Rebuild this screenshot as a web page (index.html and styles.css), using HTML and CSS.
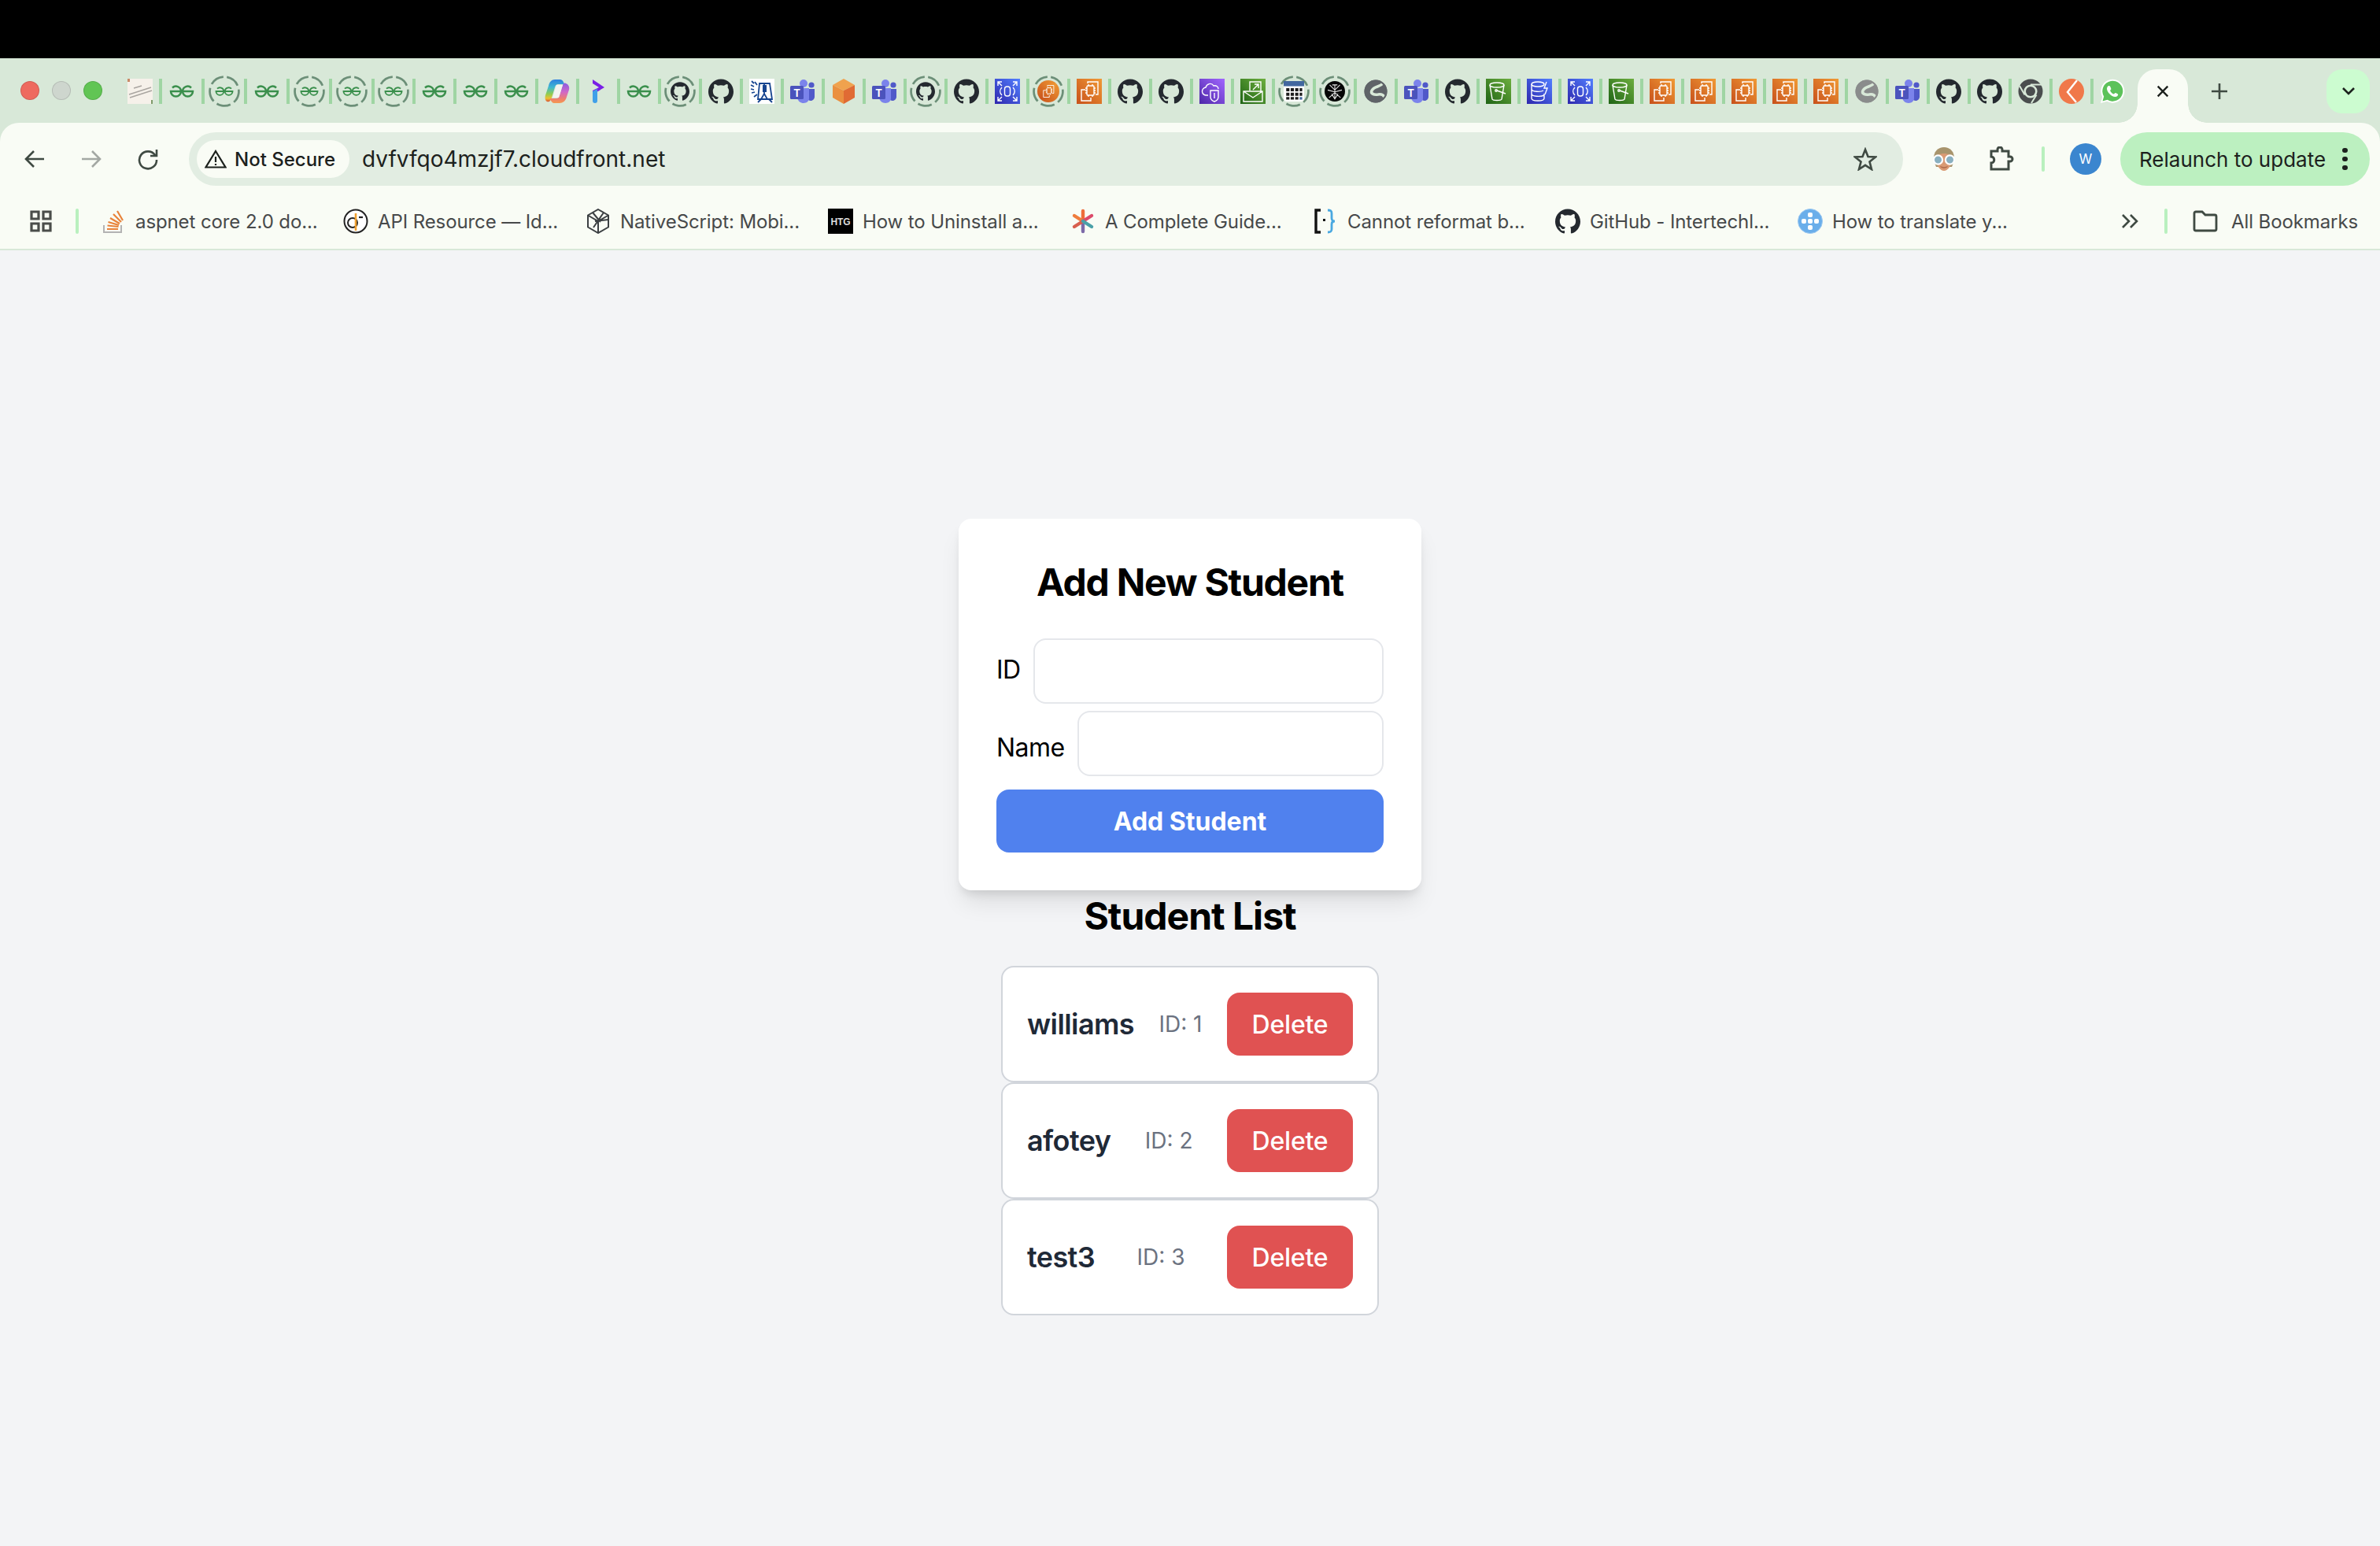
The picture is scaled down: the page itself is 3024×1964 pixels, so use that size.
FILE: index.html
```html
<!DOCTYPE html>
<html lang="en">
<head>
<meta charset="utf-8">
<title>Student Manager</title>
<link rel="stylesheet" href="styles.css">
</head>
<body>
<svg class="defs" aria-hidden="true">
  <defs>
    <linearGradient id="gOrange" x1="0" y1="1" x2="1" y2="0"><stop offset="0" stop-color="#c8511b"/><stop offset="1" stop-color="#f09a35"/></linearGradient>
    <linearGradient id="gBlue" x1="0" y1="1" x2="1" y2="0"><stop offset="0" stop-color="#2e27ad"/><stop offset="1" stop-color="#527fff"/></linearGradient>
    <linearGradient id="gGreen" x1="0" y1="1" x2="1" y2="0"><stop offset="0" stop-color="#1f6415"/><stop offset="1" stop-color="#6cae3e"/></linearGradient>
    <linearGradient id="gPurple" x1="0" y1="1" x2="1" y2="0"><stop offset="0" stop-color="#4d27a8"/><stop offset="1" stop-color="#a166ff"/></linearGradient>
    <linearGradient id="gCopA" x1="0" y1="0" x2="0" y2="1"><stop offset="0" stop-color="#2f7fe0"/><stop offset=".35" stop-color="#3fb8d0"/><stop offset=".65" stop-color="#8fcc50"/><stop offset=".85" stop-color="#eec030"/><stop offset="1" stop-color="#d85038"/></linearGradient>
    <linearGradient id="gCopB" x1="0" y1="0" x2="0" y2="1"><stop offset="0" stop-color="#8a5ee0"/><stop offset=".45" stop-color="#d068c8"/><stop offset=".8" stop-color="#f0806a"/><stop offset="1" stop-color="#f49a50"/></linearGradient>
  </defs>
  <symbol id="thumb" viewBox="0 0 32 32"><rect width="32" height="32" fill="#f6f1ea"/><path d="M2 20 30 11M3 24 31 15M8 12l10-3" stroke="#a9a5a0" stroke-width="1.4" fill="none"/><rect width="3" height="4" fill="#c98a68"/><rect x="30" y="27" width="2" height="5" fill="#7f9a6a"/></symbol>
  <symbol id="gfg" viewBox="0 0 32 32"><path d="M4 11.500A6.500 6.500 0 0 1 15 16 6.500 6.500 0 0 1 2 16H15M28 11.500A6.500 6.500 0 0 0 17 16 6.500 6.500 0 0 0 30 16H17" fill="none" stroke="#3a8f4c" stroke-width="2.500"/></symbol>
  <symbol id="ring" viewBox="-4 -4 40 40"><circle cx="16" cy="16" r="18.400" fill="none" stroke="#6c8f78" stroke-width="2.700" stroke-dasharray="18 5.100" transform="rotate(-80 16 16)"/></symbol>
  <symbol id="gh" viewBox="0 0 24 24"><path fill="#24292f" d="M12 .297c-6.630 0-12 5.373-12 12 0 5.303 3.438 9.800 8.205 11.385.6.113.82-.258.82-.577 0-.285-.01-1.040-.015-2.040-3.338.724-4.042-1.610-4.042-1.610C4.422 18.070 3.633 17.700 3.633 17.700c-1.087-.744.084-.729.084-.729 1.205.084 1.838 1.236 1.838 1.236 1.070 1.835 2.809 1.305 3.495.998.108-.776.417-1.305.76-1.605-2.665-.3-5.466-1.332-5.466-5.930 0-1.310.465-2.380 1.235-3.220-.135-.303-.54-1.523.105-3.176 0 0 1.005-.322 3.300 1.230.96-.267 1.980-.399 3-.405 1.020.006 2.040.138 3 .405 2.280-1.552 3.285-1.230 3.285-1.230.645 1.653.24 2.873.12 3.176.765.84 1.230 1.910 1.230 3.220 0 4.610-2.805 5.625-5.475 5.920.42.36.81 1.096.81 2.220 0 1.606-.015 2.896-.03 3.286 0 .315.21.69.825.57C20.565 22.092 24 17.592 24 12.297c0-6.627-5.373-12-12-12"/></symbol>
  <symbol id="copilot" viewBox="0 0 32 32"><path d="M13 1h7c2 0 4 2 5 6H17c-2 0-3 1-4 4l-4 13c-1 4-3 6-6 5-2-1-3-4-2-8L5 9c1-5 4-8 8-8Z" fill="url(#gCopA)"/><path d="M19 31h-7c-2 0-4-2-5-6h8c2 0 3-1 4-4l4-13c1-2 2-3 4-2 3 1 5 4 4 8l-3 9c-1 5-5 8-9 8Z" fill="url(#gCopB)"/><path d="M15 8h8l-5 16h-8Z" fill="#f4f4f0"/></symbol>
  <symbol id="prompt" viewBox="0 0 32 32"><path d="M9 1 24 11 9 20v-5l8-4-8-5Z" fill="#7a1fe6"/><path d="M9 16l6-3v15a3 3 0 0 1-6 0Z" fill="#3f9fe8"/></symbol>
  <symbol id="irs" viewBox="0 0 32 32"><rect width="32" height="32" fill="#fff"/><g fill="none" stroke="#16448f" stroke-width="1.800"><path d="M3 3l3 3M2 8l4 2M2 13l4 1M3 18l4-1M6 23l4-3M7 4l3 4"/><path d="M13 6h13l3 20H11Z"/><path d="M19 6v14M15 26l4-7 4 7M11 30l4-4M29 30l-4-4"/></g><path d="M17 8h5v9h-5Z" fill="#16448f"/></symbol>
  <symbol id="teams" viewBox="0 0 32 32"><circle cx="17" cy="6" r="5" fill="#7b83eb"/><circle cx="27" cy="8" r="3.600" fill="#5059c9"/><path d="M23 13h8v10c0 3-3 5-5 5-2 0-3-1-3-2Z" fill="#5059c9"/><path d="M9 12h15v13c0 3-3 6-7 6s-7-3-8-6Z" fill="#7b83eb"/><rect y="9" width="17" height="17" rx="1.500" fill="#4b53bc"/></symbol>
  <symbol id="cube" viewBox="0 0 32 32"><path d="M16 0 30 8 16 15 2 8Z" fill="#f0a24e"/><path d="M2 8 16 15V32L2 24Z" fill="#ea9040"/><path d="M30 8 16 15V32L30 24Z" fill="#e06b34"/></symbol>
  <symbol id="ec2" viewBox="0 0 32 32"><rect width="32" height="32" fill="url(#gOrange)"/><g fill="none" stroke="#fff" stroke-width="1.400"><path d="M14 6V4h13v16h-3"/><path d="M11 14H6v14h12v-4"/><rect x="13" y="9" width="9" height="12" rx="1"/><path d="M11 12h2M11 15h2M11 18h2M22 12h2M22 15h2M22 18h2M15 7v2M20 7v2M15 21v2M20 21v2"/></g></symbol>
  <symbol id="awsblue" viewBox="0 0 32 32"><rect width="32" height="32" fill="url(#gBlue)"/><g fill="none" stroke="#fff" stroke-width="1.400"><path d="M4 9V4h5M4 4l5 5M28 9V4h-5M28 4l-5 5M4 23v5h5M4 28l5-5M28 23v5h-5M28 28l-5-5"/><rect x="12.500" y="10" width="7" height="12" rx="3"/><path d="M9 11c-3 3-3 7 0 10M23 11c3 3 3 7 0 10"/></g></symbol>
  <symbol id="awspurple" viewBox="0 0 32 32"><rect width="32" height="32" fill="url(#gPurple)"/><g fill="none" stroke="#fff" stroke-width="1.400"><path d="M11 21H9a5 5 0 0 1-1-10c1-4 7-7 10-2 3-1 6 1 6 4"/><path d="M14 15h10v8c0 3-2 5-5 6-3-1-5-3-5-6Z"/><path d="M19 18v7"/></g></symbol>
  <symbol id="awsmail" viewBox="0 0 32 32"><rect width="32" height="32" fill="url(#gGreen)"/><g fill="none" stroke="#fff" stroke-width="1.400"><path d="M12 15V4h14v14"/><path d="M16 14l7-7M18 7h5v5"/><path d="M4 16h24v13H4ZM4 16l12 8 12-8"/></g></symbol>
  <symbol id="s3" viewBox="0 0 32 32"><rect width="32" height="32" fill="url(#gGreen)"/><g fill="none" stroke="#fff" stroke-width="1.400"><ellipse cx="14" cy="8" rx="9" ry="3"/><path d="M5 8l3 18c1 2 11 2 12 0l3-18"/><circle cx="13" cy="15" r="1.200"/><path d="M14 15l11 4"/></g></symbol>
  <symbol id="dynamo" viewBox="0 0 32 32"><rect width="32" height="32" fill="url(#gBlue)"/><g fill="none" stroke="#fff" stroke-width="1.400"><ellipse cx="14" cy="7" rx="8" ry="3"/><path d="M6 7v18c0 4 16 4 16 0v-6M6 13c0 4 12 4 15 2M6 19c0 4 12 4 16 2"/><path d="M25 4l-3 8h4l-3 8"/></g></symbol>
  <symbol id="cal" viewBox="0 0 32 32"><rect width="32" height="32" rx="5" fill="#fff"/><rect width="32" height="8" fill="#42679f"/><g fill="#1c1c1c"><path d="M4 11h5v5H4ZM11 11h5v5h-5ZM18 11h5v5h-5ZM25 11h4v5h-4ZM4 18h5v5H4ZM11 18h5v5h-5ZM18 18h5v5h-5ZM25 18h4v5h-4ZM4 25h5v4H4ZM11 25h5v4h-5ZM18 25h5v4h-5Z"/></g><rect x="25" y="25" width="4" height="4" fill="#42679f"/></symbol>
  <symbol id="spider" viewBox="0 0 32 32"><circle cx="16" cy="16" r="16" fill="#050505"/><g fill="none" stroke="#e8e8e8" stroke-width="1.300"><path d="M16 6v22M8 6l8 8 8-8M5 14l11 3 11-3M7 26l9-8 9 8M12 6h8M11 20l5 8 5-8"/></g></symbol>
  <symbol id="globe" viewBox="0 0 32 32"><circle cx="16" cy="16" r="14.500" fill="currentColor"/><path d="M25 6C21 11 14 9 11 15 9 19 14 21 19 20 23 19 25 20 27 23" fill="none" stroke="#d8e8d8" stroke-width="3.600"/><circle cx="16" cy="16" r="13.500" fill="none" stroke="currentColor" stroke-width="2"/></symbol>
  <symbol id="chrome" viewBox="0 0 32 32"><circle cx="16" cy="16" r="15.500" fill="#4a4d4e"/><circle cx="16" cy="16" r="8.600" fill="#d8e8d8"/><circle cx="16" cy="16" r="6" fill="#4a4d4e"/><path d="M16 7.400h14M8.600 20.500 2 9M23.500 20.500 17 31" stroke="#d8e8d8" stroke-width="2" fill="none"/></symbol>
  <symbol id="kcircle" viewBox="0 0 32 32"><circle cx="16" cy="16" r="16" fill="#f0784a"/><path d="M23 2 11 17l11 13" fill="none" stroke="#fff" stroke-width="2.400"/></symbol>
  <symbol id="wa" viewBox="0 0 32 32"><path d="M1 31l2.200-8A15 15 0 1 1 9 28.800Z" fill="#fff"/><path d="M3.500 28.500l1.700-6A13 13 0 1 1 9.500 26.800Z" fill="#5cc25a"/><path d="M11.500 9c-1 0-2.500 1.500-2.500 3.800 0 4 5.500 10.200 10.500 10.200 2.500 0 3.700-1.600 3.700-3 0-.6-2.900-2-3.500-2-.5 0-1.300 1.500-1.900 1.500-1.500 0-4.600-3-4.600-4.500 0-.6 1.200-1.300 1.200-1.900 0-.7-1.300-4.100-2.400-4.100Z" fill="#fff"/></symbol>
  <symbol id="so" viewBox="0 0 32 32"><path d="M4 21v9h22v-9" fill="none" stroke="#b3b3b3" stroke-width="2"/><path d="M8 26h14M8.500 21.500l14 1.500M9.500 17l13.500 4M12 12l12 7M16 7l10 10M21 3l7 12" fill="none" stroke="#e8833a" stroke-width="2.200"/></symbol>
  <symbol id="api" viewBox="0 0 32 32"><circle cx="16" cy="16" r="14.500" fill="#fff" stroke="#222" stroke-width="2"/><circle cx="12" cy="18" r="6" fill="none" stroke="#222" stroke-width="2"/><path d="M16 6v22" stroke="#f0a030" stroke-width="2.600"/><path d="M20 11h5" stroke="#222" stroke-width="2.200"/></symbol>
  <symbol id="ns" viewBox="0 0 32 32"><g fill="none" stroke="#3c4043" stroke-width="2"><path d="M16 1 29 8.500v15L16 31 3 23.500v-15Z"/><path d="M3 8.500 16 16l13-7.500M16 16v15M9 5l10 12M23 5 10 24M29 14l-17 2"/></g></symbol>
  <symbol id="star8" viewBox="0 0 32 32"><g stroke-width="4.400" stroke-linecap="round"><path d="M16 16V3" stroke="#ee6d3b"/><path d="M16 16V29" stroke="#7c6aa8"/><path d="M16 16 5 9" stroke="#ef7d3d"/><path d="M16 16 27 9" stroke="#dc4a6a"/><path d="M16 16 5 23" stroke="#d8604e"/><path d="M16 16 27 23" stroke="#4aa0a8"/></g></symbol>
  <symbol id="bracket" viewBox="0 0 32 32"><path d="M10 2H4v28h6" fill="none" stroke="#111" stroke-width="3.400"/><path d="M19 2c4 0 5 1 5 4v6c0 2 1 4 4 4-3 0-4 2-4 4v6c0 3-1 4-5 4" fill="none" stroke="#4aa8e0" stroke-width="2.800"/><rect x="13" y="13" width="3" height="3" fill="#111"/></symbol>
  <symbol id="dots" viewBox="0 0 32 32"><circle cx="16" cy="16" r="15.500" fill="#6aaeea" stroke="#9cc8f0"/><g fill="#fff"><rect x="13" y="5" width="6" height="6" rx="2"/><rect x="13" y="21" width="6" height="6" rx="2"/><rect x="5" y="13" width="6" height="6" rx="2"/><rect x="13" y="13" width="6" height="6" rx="2"/><rect x="21" y="13" width="6" height="6" rx="2"/></g></symbol>
</svg>

<header class="chrome">
  <div class="topbar"></div>
  <div class="tabstrip">
    <div class="lights"><span class="light light-red"></span><span class="light light-grey"></span><span class="light light-green"></span></div>
    <div class="tab tab-first"><svg class="ic" viewBox="0 0 32 32"><use href="#thumb"/></svg></div>
    <div class="tab tab-wide"><svg class="ic" viewBox="0 0 32 32"><use href="#gfg"/></svg></div>
    <div class="tab tab-wide"><svg class="ic" viewBox="0 0 32 32"><use href="#ring" x="-4" y="-4" width="40" height="40"/><use href="#gfg" x="4" y="4" width="24" height="24"/></svg></div>
    <div class="tab tab-wide"><svg class="ic" viewBox="0 0 32 32"><use href="#gfg"/></svg></div>
    <div class="tab tab-wide"><svg class="ic" viewBox="0 0 32 32"><use href="#ring" x="-4" y="-4" width="40" height="40"/><use href="#gfg" x="4" y="4" width="24" height="24"/></svg></div>
    <div class="tab tab-wide"><svg class="ic" viewBox="0 0 32 32"><use href="#ring" x="-4" y="-4" width="40" height="40"/><use href="#gfg" x="4" y="4" width="24" height="24"/></svg></div>
    <div class="tab"><svg class="ic" viewBox="0 0 32 32"><use href="#ring" x="-4" y="-4" width="40" height="40"/><use href="#gfg" x="4" y="4" width="24" height="24"/></svg></div>
    <div class="tab"><svg class="ic" viewBox="0 0 32 32"><use href="#gfg"/></svg></div>
    <div class="tab"><svg class="ic" viewBox="0 0 32 32"><use href="#gfg"/></svg></div>
    <div class="tab"><svg class="ic" viewBox="0 0 32 32"><use href="#gfg"/></svg></div>
    <div class="tab"><svg class="ic" viewBox="0 0 32 32"><use href="#copilot"/></svg></div>
    <div class="tab"><svg class="ic" viewBox="0 0 32 32"><use href="#prompt"/></svg></div>
    <div class="tab"><svg class="ic" viewBox="0 0 32 32"><use href="#gfg"/></svg></div>
    <div class="tab"><svg class="ic" viewBox="0 0 32 32"><use href="#ring" x="-4" y="-4" width="40" height="40"/><use href="#gh" x="4" y="4" width="24" height="24"/></svg></div>
    <div class="tab"><svg class="ic" viewBox="0 0 32 32"><use href="#gh"/></svg></div>
    <div class="tab"><svg class="ic" viewBox="0 0 32 32"><use href="#irs"/></svg></div>
    <div class="tab"><svg class="ic" viewBox="0 0 32 32"><use href="#teams"/><text x="8.500" y="22.500" class="svg-t">T</text></svg></div>
    <div class="tab"><svg class="ic" viewBox="0 0 32 32"><use href="#cube"/></svg></div>
    <div class="tab"><svg class="ic" viewBox="0 0 32 32"><use href="#teams"/><text x="8.500" y="22.500" class="svg-t">T</text></svg></div>
    <div class="tab"><svg class="ic" viewBox="0 0 32 32"><use href="#ring" x="-4" y="-4" width="40" height="40"/><use href="#gh" x="4" y="4" width="24" height="24"/></svg></div>
    <div class="tab"><svg class="ic" viewBox="0 0 32 32"><use href="#gh"/></svg></div>
    <div class="tab"><svg class="ic" viewBox="0 0 32 32"><use href="#awsblue"/></svg></div>
    <div class="tab"><svg class="ic" viewBox="0 0 32 32"><use href="#ring" x="-4" y="-4" width="40" height="40"/><circle cx="16" cy="16" r="14" fill="url(#gOrange)"/><use href="#ec2" x="6" y="6" width="20" height="20"/></svg></div>
    <div class="tab"><svg class="ic" viewBox="0 0 32 32"><use href="#ec2"/></svg></div>
    <div class="tab"><svg class="ic" viewBox="0 0 32 32"><use href="#gh"/></svg></div>
    <div class="tab"><svg class="ic" viewBox="0 0 32 32"><use href="#gh"/></svg></div>
    <div class="tab"><svg class="ic" viewBox="0 0 32 32"><use href="#awspurple"/></svg></div>
    <div class="tab"><svg class="ic" viewBox="0 0 32 32"><use href="#awsmail"/></svg></div>
    <div class="tab"><svg class="ic" viewBox="0 0 32 32"><use href="#ring" x="-4" y="-4" width="40" height="40"/><use href="#cal" x="3" y="3" width="26" height="26"/></svg></div>
    <div class="tab"><svg class="ic" viewBox="0 0 32 32"><use href="#ring" x="-4" y="-4" width="40" height="40"/><use href="#spider" x="3" y="3" width="26" height="26"/></svg></div>
    <div class="tab"><svg class="ic globe-dark" viewBox="0 0 32 32"><use href="#globe"/></svg></div>
    <div class="tab"><svg class="ic" viewBox="0 0 32 32"><use href="#teams"/><text x="8.500" y="22.500" class="svg-t">T</text></svg></div>
    <div class="tab"><svg class="ic" viewBox="0 0 32 32"><use href="#gh"/></svg></div>
    <div class="tab"><svg class="ic" viewBox="0 0 32 32"><use href="#s3"/></svg></div>
    <div class="tab"><svg class="ic" viewBox="0 0 32 32"><use href="#dynamo"/></svg></div>
    <div class="tab"><svg class="ic" viewBox="0 0 32 32"><use href="#awsblue"/></svg></div>
    <div class="tab"><svg class="ic" viewBox="0 0 32 32"><use href="#s3"/></svg></div>
    <div class="tab"><svg class="ic" viewBox="0 0 32 32"><use href="#ec2"/></svg></div>
    <div class="tab"><svg class="ic" viewBox="0 0 32 32"><use href="#ec2"/></svg></div>
    <div class="tab"><svg class="ic" viewBox="0 0 32 32"><use href="#ec2"/></svg></div>
    <div class="tab"><svg class="ic" viewBox="0 0 32 32"><use href="#ec2"/></svg></div>
    <div class="tab"><svg class="ic" viewBox="0 0 32 32"><use href="#ec2"/></svg></div>
    <div class="tab"><svg class="ic globe-light" viewBox="0 0 32 32"><use href="#globe"/></svg></div>
    <div class="tab"><svg class="ic" viewBox="0 0 32 32"><use href="#teams"/><text x="8.500" y="22.500" class="svg-t">T</text></svg></div>
    <div class="tab"><svg class="ic" viewBox="0 0 32 32"><use href="#gh"/></svg></div>
    <div class="tab"><svg class="ic" viewBox="0 0 32 32"><use href="#gh"/></svg></div>
    <div class="tab"><svg class="ic" viewBox="0 0 32 32"><use href="#chrome"/></svg></div>
    <div class="tab"><svg class="ic" viewBox="0 0 32 32"><use href="#kcircle"/></svg></div>
    <div class="tab tab-last"><svg class="ic" viewBox="0 0 32 32"><use href="#wa"/></svg></div>
    <div class="tab-active"><svg class="close" viewBox="0 0 20 20"><path d="M3 3 17 17M17 3 3 17"/></svg></div>
    <svg class="plus" viewBox="0 0 22 22"><path d="M11 1V21M1 11H21"/></svg>
    <div class="tabs-menu"><svg class="chev" viewBox="0 0 18 12"><path d="M2 2 9 9 16 2"/></svg></div>
  </div>

  <div class="toolbar">
    <div class="navrow">
      <div class="nav-icons">
        <svg class="nav-ic" viewBox="0 0 28 28"><path d="M26 14H4M13 4 3 14 13 24"/></svg>
        <svg class="nav-ic nav-off" viewBox="0 0 28 28"><path d="M2 14H24M15 4 25 14 15 24"/></svg>
        <svg class="nav-ic" viewBox="0 0 28 28"><path d="M23 9A11 11 0 1 0 25 15M25 2V10H17"/></svg>
      </div>
      <div class="address">
        <div class="secure">
          <svg class="warn" viewBox="0 0 28 24"><path d="M14 2 26.500 22.500H1.500Z"/><path d="M14 9V16M14 18V20"/></svg>
          <span class="secure-text">Not Secure</span>
        </div>
        <span class="url">dvfvfqo4mzjf7.cloudfront.net</span>
        <svg class="star" viewBox="0 0 30 30"><path d="M15 3 18.500 12 28 12.500 20.500 18.500 23 28 15 22.800 7 28 9.500 18.500 2 12.500 11.500 12Z"/></svg>
      </div>
      <svg class="emoji" viewBox="0 0 32 32">
        <path d="M3 18C2 6 9 1 16 1s14 5 13 17l-3 8H6Z" fill="#a8946c"/>
        <path d="M6 15c0-4 5-6 10-6s10 2 10 6c0 9-5 16-10 16S6 24 6 15Z" fill="#d99a74"/>
        <path d="M11 25c3 1.500 7 1.500 10 0-1 3.500-9 3.500-10 0Z" fill="#b06a4a"/>
        <circle cx="8.500" cy="17" r="5.600" fill="#8ab0c0" stroke="#fff" stroke-width="2.200"/>
        <circle cx="23.500" cy="17" r="5.600" fill="#8ab0c0" stroke="#fff" stroke-width="2.200"/>
      </svg>
      <svg class="puzzle" viewBox="0 0 32 32"><path d="M3 6H11V4a3 3 0 0 1 6 0V6H25V13H27a3 3 0 0 1 0 6H25V29H3V21C8 21 8 13 3 13Z"/></svg>
      <span class="vsep"></span>
      <span class="profile">W</span>
      <div class="relaunch">
        <span class="relaunch-text">Relaunch to update</span>
        <span class="kebab"><i></i><i></i><i></i></span>
      </div>
    </div>

    <div class="bookmarks">
      <svg class="apps" viewBox="0 0 28 28"><path d="M2 2H11V11H2ZM17 2H26V11H17ZM2 17H11V26H2ZM17 17H26V26H17Z"/></svg>
      <span class="vsep vsep-apps"></span>
      <div class="bm-list">
        <div class="bm"><svg class="ic" viewBox="0 0 32 32"><use href="#so"/></svg><span>aspnet core 2.0 do...</span></div>
        <div class="bm"><svg class="ic" viewBox="0 0 32 32"><use href="#api"/></svg><span>API Resource — Id...</span></div>
        <div class="bm"><svg class="ic" viewBox="0 0 32 32"><use href="#ns"/></svg><span>NativeScript: Mobi...</span></div>
        <div class="bm"><svg class="ic" viewBox="0 0 32 32"><rect class="htg-bg" width="32" height="32"/><text x="16" y="21" class="svg-h">HTG</text></svg><span>How to Uninstall a...</span></div>
        <div class="bm"><svg class="ic" viewBox="0 0 32 32"><use href="#star8"/></svg><span>A Complete Guide...</span></div>
        <div class="bm"><svg class="ic" viewBox="0 0 32 32"><use href="#bracket"/></svg><span>Cannot reformat b...</span></div>
        <div class="bm"><svg class="ic" viewBox="0 0 32 32"><use href="#gh"/></svg><span>GitHub - Intertechl...</span></div>
        <div class="bm"><svg class="ic" viewBox="0 0 32 32"><use href="#dots"/></svg><span>How to translate y...</span></div>
      </div>
      <svg class="more" viewBox="0 0 22 20"><path d="M2 2 10 10 2 18M12 2 20 10 12 18"/></svg>
      <span class="vsep vsep-more"></span>
      <svg class="folder" viewBox="0 0 32 28"><path d="M2 4a2 2 0 0 1 2-2H12L16 6H28a2 2 0 0 1 2 2V24a2 2 0 0 1-2 2H4a2 2 0 0 1-2-2Z"/></svg>
      <span class="bm-all">All Bookmarks</span>
    </div>
  </div>
</header>

<main class="page">
  <form class="card">
    <h1 class="card-title">Add New Student</h1>
    <div class="field">
      <label class="field-label label-id" for="sid">ID</label>
      <input class="field-input" id="sid" type="text">
    </div>
    <div class="field field-name">
      <label class="field-label label-name" for="sname">Name</label>
      <input class="field-input" id="sname" type="text">
    </div>
    <button class="add-btn" type="button">Add Student</button>
  </form>

  <h2 class="list-title">Student List</h2>
  <ul class="students">
    <li class="student"><span class="student-name">williams</span><span class="student-id">ID: 1</span><button class="del-btn" type="button">Delete</button></li>
    <li class="student"><span class="student-name">afotey</span><span class="student-id">ID: 2</span><button class="del-btn" type="button">Delete</button></li>
    <li class="student"><span class="student-name">test3</span><span class="student-id">ID: 3</span><button class="del-btn" type="button">Delete</button></li>
  </ul>
</main>
</body>
</html>
```

FILE: styles.css
```css
* { box-sizing: border-box; }

html, body { margin: 0; padding: 0; }

body {
  width: 3024px;
  height: 1964px;
  overflow: hidden;
  background: #f3f4f6;
  font-family: Inter, "Liberation Sans", sans-serif;
  color: #000;
}

.defs { display: block; width: 0; height: 0; }

.chrome { background: #d8e8d8; }

.topbar { height: 74px; background: #000; }

.tabstrip {
  display: flex;
  align-items: flex-start;
  height: 82px;
  padding-top: 14px;
}

.lights { display: flex; gap: 16px; margin: 15px 0 0 26px; }
.light { width: 24px; height: 24px; border-radius: 50%; border: 1px solid rgba(0,0,0,.12); }
.light-red { background: #ee6a5f; }
.light-grey { background: #ced6ce; }
.light-green { background: #61c554; }

.tab {
  display: flex;
  align-items: center;
  justify-content: center;
  flex: 0 0 52px;
  height: 32px;
  margin-top: 12px;
  border-right: 4px solid #9fd5a3;
}
.tab-first { margin-left: 24px; }
.tab-wide { flex-basis: 54px; }
.tab-last { flex-basis: 48px; border-right: 0; }

.ic { display: block; flex: none; width: 32px; height: 32px; overflow: visible; }
.globe-dark { color: #5f6368; }
.globe-light { color: #8a8c8c; }
.htg-bg { fill: #000; }

.svg-t { font: 700 13px Inter, sans-serif; fill: #fff; text-anchor: middle; }
.svg-h { font: 700 12px "Liberation Sans", sans-serif; fill: #ddd; text-anchor: middle; }

.tab-active {
  position: relative;
  display: flex;
  align-items: flex-start;
  justify-content: center;
  flex: 0 0 64px;
  height: 68px;
  margin-left: 8px;
  padding-top: 19px;
  background: #f9fcf5;
  border-radius: 24px 24px 0 0;
}
.tab-active::before,
.tab-active::after {
  content: "";
  position: absolute;
  bottom: 0;
  width: 24px;
  height: 24px;
}
.tab-active::before { left: -24px; background: radial-gradient(circle at 0 0, transparent 23.5px, #f9fcf5 24px); }
.tab-active::after { right: -24px; background: radial-gradient(circle at 100% 0, transparent 23.5px, #f9fcf5 24px); }

.close { width: 18px; height: 18px; fill: none; stroke: #1c211d; stroke-width: 2.6; }
.plus { flex: none; width: 22px; height: 22px; margin: 17px 0 0 29px; fill: none; stroke: #3f4a42; stroke-width: 2.6; }
.tabs-menu {
  display: flex;
  align-items: center;
  justify-content: center;
  flex: 0 0 55px;
  height: 56px;
  margin-left: auto;
  margin-right: 13px;
  background: #ccfcd0;
  border-radius: 20px;
}
.chev { width: 18px; height: 12px; fill: none; stroke: #1c211d; stroke-width: 2.6; }

.toolbar {
  background: #f9fcf5;
  border-radius: 24px 24px 0 0;
  border-bottom: 2px solid #d8e8d8;
}

.navrow { display: flex; align-items: center; height: 80px; padding-top: 12px; }

.nav-icons { display: flex; gap: 44px; margin: 0 38px 0 30px; }
.nav-ic { width: 28px; height: 28px; fill: none; stroke: #3f4a42; stroke-width: 2.6; }
.nav-off { stroke: #a3a8a3; }

.address {
  display: flex;
  align-items: center;
  flex: 0 0 2178px;
  height: 68px;
  padding: 0 33px 0 10px;
  background: #e2ede2;
  border-radius: 34px;
}

.secure {
  display: flex;
  align-items: center;
  gap: 10px;
  height: 48px;
  padding: 0 18px 0 10px;
  background: #f9fcf5;
  border-radius: 24px;
}
.warn { width: 28px; height: 24px; fill: none; stroke: #1c211d; stroke-width: 2.2; }
.secure-text { font-size: 24px; font-weight: 500; color: #1c211d; }
.url { margin-left: 16px; font-size: 28px; color: #1c211d; }
.star { width: 30px; height: 30px; margin-left: auto; fill: none; stroke: #3f4a42; stroke-width: 2.6; }

.emoji { flex: none; width: 32px; height: 32px; margin-left: 36px; }
.puzzle { flex: none; width: 32px; height: 32px; margin-left: 41px; fill: none; stroke: #3f4a42; stroke-width: 3; }
.vsep { flex: none; width: 4px; height: 32px; background: #b9f0be; border-radius: 2px; }
.navrow .vsep { margin-left: 35px; }

.profile {
  display: flex;
  align-items: center;
  justify-content: center;
  flex: none;
  width: 40px;
  height: 40px;
  margin-left: 32px;
  background: #3b86cf;
  border-radius: 50%;
  color: #fff;
  font-size: 17px;
}

.relaunch {
  display: flex;
  align-items: center;
  flex: 0 0 317px;
  height: 68px;
  margin-left: 24px;
  padding-left: 24px;
  background: #bcf0c0;
  border-radius: 34px;
}
.relaunch-text { font-size: 26px; color: #1c211d; }
.kebab { display: flex; flex-direction: column; gap: 4.5px; margin-left: 21px; }
.kebab i { display: block; width: 6.5px; height: 6.5px; background: #1c211d; border-radius: 50%; }

.bookmarks { display: flex; align-items: center; height: 80px; padding-top: 10px; }
.apps { flex: none; width: 28px; height: 28px; margin-left: 38px; fill: none; stroke: #4a4d4a; stroke-width: 3.2; }
.vsep-apps { margin-left: 30px; }

.bm-list { display: flex; margin-left: 28px; }
.bm {
  display: flex;
  align-items: center;
  gap: 12px;
  flex: 0 0 308px;
  font-size: 24px;
  letter-spacing: -.1px;
  color: #47494a;
  white-space: nowrap;
}

.more { flex: none; width: 22px; height: 20px; margin-left: 103px; fill: none; stroke: #3f4a42; stroke-width: 2.6; }
.vsep-more { margin-left: 33px; }
.folder { flex: none; width: 32px; height: 28px; margin-left: 32px; fill: none; stroke: #3f4a42; stroke-width: 2.8; }
.bm-all { margin-left: 17px; font-size: 24px; letter-spacing: -.1px; color: #47494a; white-space: nowrap; }

.page {
  display: flex;
  flex-direction: column;
  align-items: center;
  padding-top: 341px;
}

.card {
  width: 588px;
  height: 472px;
  padding: 48px 48px 0;
  background: #fff;
  border-radius: 16px;
  box-shadow: 0 20px 30px -6px rgba(0,0,0,.1), 0 8px 12px -4px rgba(0,0,0,.1);
}

.card-title {
  margin: 0;
  font-size: 48px;
  font-weight: 700;
  line-height: 66px;
  letter-spacing: -1.25px;
  text-align: center;
}

.field { display: flex; align-items: center; gap: 16px; margin-top: 38px; }
.field-name { margin-top: 9px; }
.field-label { font-size: 32px; line-height: 40px; letter-spacing: -.5px; }
.label-id { margin-bottom: 4px; }
.label-name { margin-top: 10px; }

.field-input {
  flex: 1;
  min-width: 0;
  height: 83px;
  border: 2px solid #e5e7eb;
  border-radius: 16px;
  background: #fff;
}

.add-btn {
  display: block;
  width: 100%;
  height: 80px;
  margin-top: 17px;
  border: 0;
  border-radius: 16px;
  background: #5081ee;
  color: #fff;
  font: 700 32px Inter, sans-serif;
}

.list-title {
  margin: 0;
  height: 64px;
  margin-top: 1px;
  font-size: 48px;
  font-weight: 700;
  line-height: 64px;
  letter-spacing: -1px;
  text-align: center;
}

.students { width: 480px; margin: 31px 0 0; padding: 0; list-style: none; }

.student {
  display: flex;
  align-items: center;
  justify-content: space-between;
  height: 148px;
  padding: 32px 31px 32px 31px;
  background: #fff;
  border: 2px solid #d1d5db;
  border-radius: 16px;
}

.student-name { font-size: 36px; font-weight: 600; letter-spacing: -.6px; color: #1f2937; }
.student-id { font-size: 28px; color: #6b7280; }

.del-btn {
  width: 160px;
  height: 80px;
  border: 0;
  border-radius: 16px;
  background: #e05252;
  color: #fff;
  font: 500 32px Inter, sans-serif;
  letter-spacing: -.2px;
}
```
